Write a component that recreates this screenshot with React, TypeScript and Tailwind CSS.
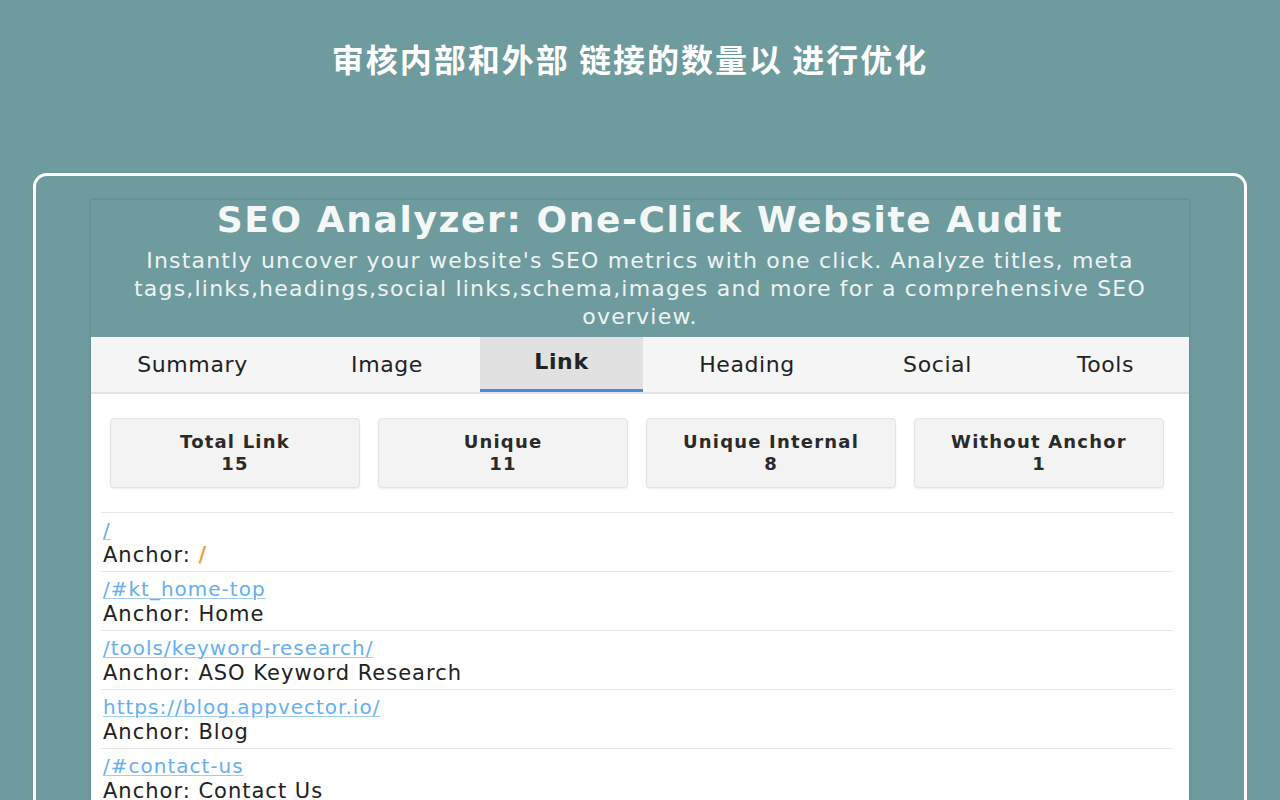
const tabs = [
  { label: "Summary", w: "w-[203px]" },
  { label: "Image", w: "w-[186px]" },
  { label: "Link", w: "w-[163px]", active: true },
  { label: "Heading", w: "w-[208px]" },
  { label: "Social", w: "w-[173px]" },
  { label: "Tools", w: "w-[163px]" },
];

const stats = [
  { label: "Total Link", value: 15 },
  { label: "Unique", value: 11 },
  { label: "Unique Internal", value: 8 },
  { label: "Without Anchor", value: 1 },
];

const links = [
  { href: "/", anchor: "/", slash: true },
  { href: "/#kt_home-top", anchor: "Home" },
  { href: "/tools/keyword-research/", anchor: "ASO Keyword Research" },
  { href: "https://blog.appvector.io/", anchor: "Blog" },
  { href: "/#contact-us", anchor: "Contact Us" },
];

export default function App() {
  return (
    <div className="h-[800px] overflow-hidden bg-[#6e9b9d] font-['DejaVu_Sans',sans-serif]">
      <h1 className="pt-[38px] pr-[20px] text-center text-[32px] leading-[40px] font-bold tracking-[2px] text-white font-['Noto_Sans_CJK_SC',sans-serif]">
        审核内部和外部 链接的数量以 进行优化
      </h1>

      {/* white framed screenshot area */}
      <div className="mx-[33px] mt-[95px] h-[700px] rounded-t-[14px] border-[3px] border-b-0 border-white px-[55px] pt-[24px]">
        <div className="bg-[#6e9b9d] shadow-[0_0_3px_rgba(0,0,0,0.18)]">
          <div className="px-[24px] pb-[6px] text-center text-[#f4f7f7]">
            <h2 className="text-[36px] leading-[40px] font-bold tracking-[1.6px]">SEO Analyzer: One-Click Website Audit</h2>
            <p className="mt-[7px] text-[22px] leading-[28px] tracking-[1.2px] text-[#eef3f3]">
              Instantly uncover your website's SEO metrics with one click. Analyze titles, meta tags,links,headings,social
              links,schema,images and more for a comprehensive SEO overview.
            </p>
          </div>

          <div className="flex border-b-2 border-[#e2e2e2] bg-[#f5f5f5]">
            {tabs.map((t) => (
              <div
                key={t.label}
                className={[
                  "flex h-[55px] items-center justify-center text-[22px] tracking-[0.6px] text-[#222]",
                  t.w,
                  t.active ? "border-b-[3px] border-[#4f86e6] bg-[#e1e1e1] pb-[3px] font-bold text-[#111]" : "",
                ].join(" ")}
              >
                {t.label}
              </div>
            ))}
          </div>

          <div className="bg-white pl-[10px] pr-[16px] pt-[24px]">
            <div className="mx-[9px] grid grid-cols-4 gap-[18px]">
              {stats.map((s) => (
                <div
                  key={s.label}
                  className="h-[70px] rounded-[4px] border border-[#e3e3e3] bg-[#f3f3f3] pt-[12px] text-center text-[18px] leading-[22px] font-bold tracking-[1.2px] text-[#2a2a2a] shadow-[0_1px_2px_rgba(0,0,0,0.08)]"
                >
                  <div>{s.label}</div>
                  <div>{s.value}</div>
                </div>
              ))}
            </div>

            <ul className="mt-[24px]">
              {links.map((l) => (
                <li key={l.href} className="border-t border-[#e8e8e8] px-[2px] pt-[5px] pb-[3px]">
                  <a className="block text-[20px] leading-[24px] tracking-[1px] text-[#67b0ee] underline decoration-[#9fcdf3] decoration-1 underline-offset-2">
                    {l.href}
                  </a>
                  <div className="text-[21px] leading-[26px] tracking-[1px] text-[#222]">
                    Anchor: {l.slash ? <span className="font-bold text-[#eba142]">/</span> : l.anchor}
                  </div>
                </li>
              ))}
            </ul>
          </div>
        </div>
      </div>
    </div>
  );
}
